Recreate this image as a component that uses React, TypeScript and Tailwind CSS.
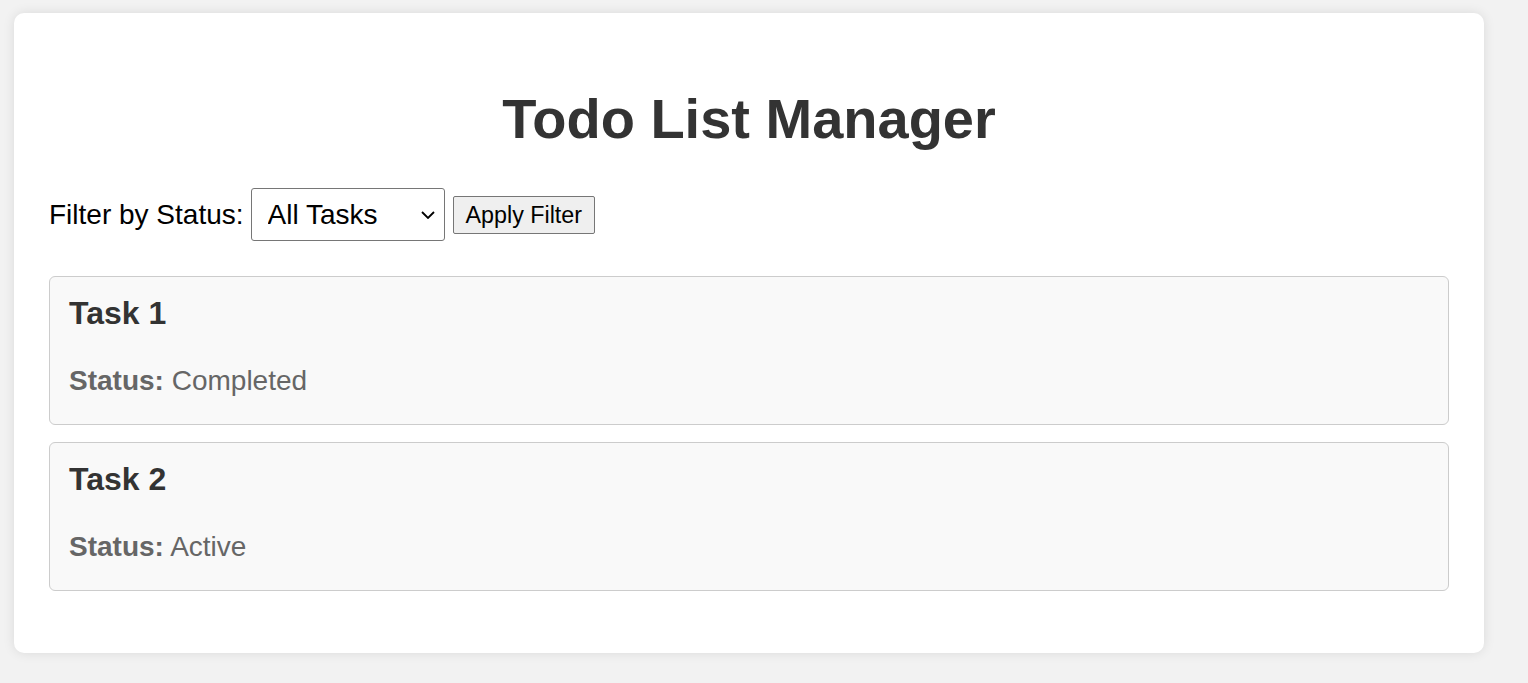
const tasks = [
  { id: 1, title: "Task 1", status: "Completed" },
  { id: 2, title: "Task 2", status: "Active" },
];

export default function App() {
  return (
    <div className="min-h-screen bg-[#f2f2f2] pl-[14px] pt-[13px] pb-[30px] font-['Liberation_Sans',Arial,sans-serif]">
      <div className="w-[1470px] rounded-[10px] bg-white px-[35px] pt-[70px] pb-[62px] shadow-[0_0_12px_rgba(0,0,0,0.1)]">
        <h1 className="text-center text-[56px] font-bold leading-[72px] text-[#333]">Todo List Manager</h1>
        <div className="mt-[33px] flex items-center">
          <label className="text-[28px] text-black">Filter by Status:</label>
          <div className="relative ml-[7px]">
            <select className="block h-[53px] w-[194px] appearance-none rounded-[3px] border border-[#767676] bg-white pl-[16px] text-[28px] text-black">
              <option>All Tasks</option>
              <option>Completed</option>
              <option>Active</option>
            </select>
            <svg
              className="pointer-events-none absolute right-[10px] top-[23px]"
              width="14"
              height="8"
              viewBox="0 0 14 8"
              fill="none"
            >
              <path d="M1 1l6 6 6-6" stroke="#000" strokeWidth="1.8" />
            </svg>
          </div>
          <button className="ml-[8px] mt-[1px] h-[38px] rounded-[2px] border border-[#767676] bg-[#efefef] px-[12px] text-[23.3px] text-black">
            Apply Filter
          </button>
        </div>
        <div className="mt-[35px] flex flex-col gap-[17px]">
          {tasks.map((t) => (
            <div key={t.id} className="h-[149px] rounded-[6px] border border-[#ccc] bg-[#f9f9f9] px-[19px] pt-[17px]">
              <h2 className="text-[32px] font-bold leading-[38px] text-[#333]">{t.title}</h2>
              <p className="mt-[33px] text-[28px] leading-[32px] text-[#666]">
                <strong>Status:</strong> {t.status}
              </p>
            </div>
          ))}
        </div>
      </div>
    </div>
  );
}
